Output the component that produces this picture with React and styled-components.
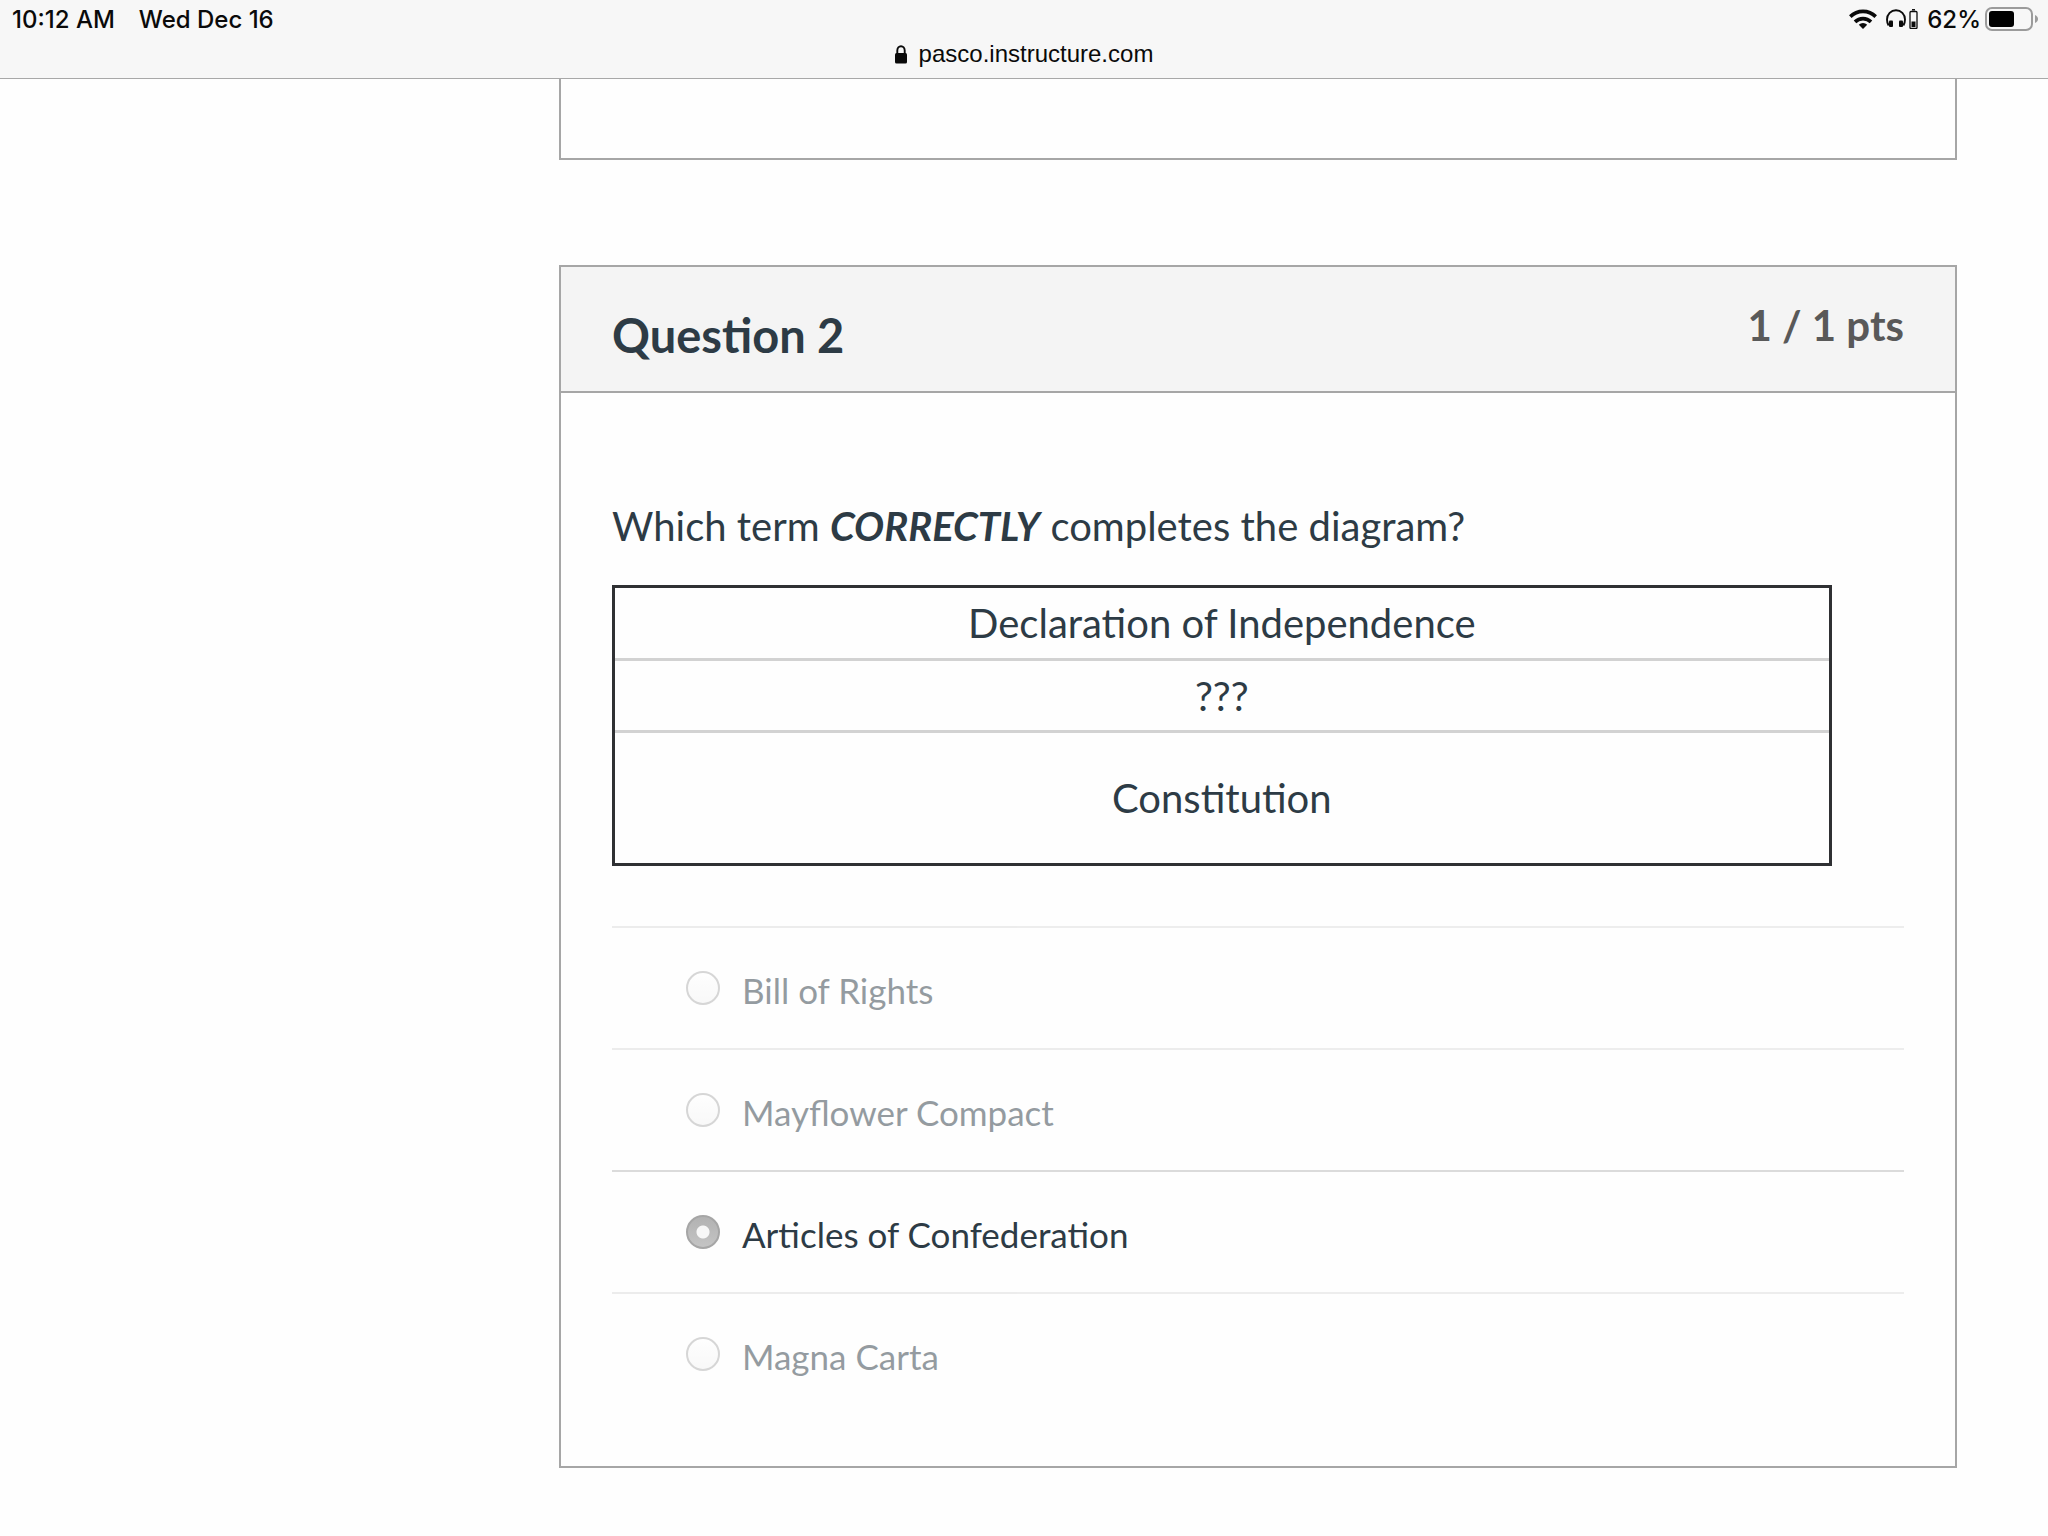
import React, { useState } from 'react';
import styled, { createGlobalStyle } from 'styled-components';

const GlobalStyle = createGlobalStyle`
  * {
    box-sizing: border-box;
  }

  body {
    margin: 0;
    background-color: #fefefe;
    color: #2d3b45;
    font-family: Lato, "Liberation Sans", sans-serif;
  }
`;

const BrowserBar = styled.header`
  background-color: #f7f7f7;
  border-bottom: 1px solid #a8a8a8;
  padding-bottom: 8px;
  color: #0a0a0a;
  font-size: 24px;
`;

const StatusRow = styled.div`
  display: flex;
  align-items: center;
  justify-content: space-between;
  height: 38px;
  padding: 0 10px 0 12px;
  font-family: Inter, "Liberation Sans", sans-serif;
  font-weight: 500;
`;

const StatusTime = styled.div`
  display: flex;
  gap: 24px;
`;

const StatusIcons = styled.div`
  display: flex;
  align-items: center;
  gap: 9px;
`;

const BatteryLevel = styled.div`
  display: flex;
  align-items: center;
  gap: 4px;
`;

const Icon = styled.svg`
  display: block;
  flex: none;
`;

const AddressRow = styled.div`
  display: flex;
  align-items: center;
  justify-content: center;
  gap: 12px;
  font-family: "Liberation Sans", sans-serif;
  line-height: 32px;
`;

const Page = styled.main`
  display: flex;
  flex-direction: column;
  gap: 105px;
  padding: 0 91px 68px 559px;
`;

const PreviousCard = styled.section`
  height: 81px;
  border: 2px solid #a6a6a6;
  border-top: none;
`;

const Card = styled.section`
  border: 2px solid #a6a6a6;
`;

const CardHeader = styled.div`
  display: flex;
  align-items: flex-start;
  justify-content: space-between;
  padding: 33px 51px 31px;
  background-color: #f4f4f4;
  border-bottom: 2px solid #a6a6a6;
`;

const Title = styled.h2`
  margin: 0;
  padding-top: 10px;
  font-size: 47px;
  line-height: 50px;
  font-weight: 700;
`;

const Points = styled.span`
  color: #595959;
  font-size: 42px;
  line-height: 50px;
  font-weight: 700;
`;

const CardBody = styled.div`
  padding: 108px 51px 52px;
`;

const Prompt = styled.p`
  margin: 0 0 34px;
  font-size: 40px;
  line-height: 50px;
`;

const Diagram = styled.table`
  width: 94.4%;
  border-collapse: separate;
  border-spacing: 0;
  border: 3px solid #2f3033;
  font-size: 40px;
  line-height: 48px;
  text-align: center;
`;

const DiagramCell = styled.td`
  height: ${({ $tall }) => ($tall ? '133px' : '72px')};
  padding: 0;
  border-top: 3px solid #d2d2d2;
  vertical-align: middle;

  tr:first-child > & {
    height: 70px;
    border-top: none;
  }
`;

const Answers = styled.fieldset`
  margin: 60px 0 0;
  padding: 0;
  border: none;
`;

const Answer = styled.div`
  display: flex;
  align-items: center;
  gap: 22px;
  height: 122px;
  padding-left: 74px;
  border-top: 2px solid #dbdbdb;
  opacity: ${({ $selected }) => ($selected ? 1 : 0.5)};
`;

const Radio = styled.input`
  appearance: none;
  flex: none;
  width: 34px;
  height: 34px;
  margin: 0;
  border: 2px solid #b0b0b0;
  border-radius: 50%;
  background: linear-gradient(#ffffff, #f4f4f4);

  &:checked {
    border-color: #a6a6a6;
    background: radial-gradient(circle, #f7f7f7 6px, transparent 7px), linear-gradient(#b2b2b2, #c4c4c4);
  }
`;

const AnswerLabel = styled.label`
  padding-top: 4px;
  font-size: 35px;
  line-height: 42px;
`;

const diagramRows = [
  { text: 'Declaration of Independence' },
  { text: '???' },
  { text: 'Constitution', tall: true },
];

const answers = ['Bill of Rights', 'Mayflower Compact', 'Articles of Confederation', 'Magna Carta'];

const WifiIcon = () => (
  <Icon width="28" height="20" viewBox="0 0 28 20" fill="none" stroke="#0a0a0a" strokeWidth="3.6">
    <path d="M1.3 7.6a18 18 0 0 1 25.4 0" />
    <path d="M6 12.9a11.4 11.4 0 0 1 16 0" />
    <path d="M14 20l-4.2-4.2a6 6 0 0 1 8.4 0z" fill="#0a0a0a" stroke="none" />
  </Icon>
);

const HeadphonesIcon = () => (
  <Icon width="32" height="20" viewBox="0 0 32 20" fill="none" stroke="#0a0a0a">
    <path d="M2.6 16.5C1.5 14.6 1 12.6 1 10.5a9 9.3 0 0 1 18 0c0 2.1-.5 4.1-1.6 6" strokeWidth="1.9" />
    <rect x="3" y="11.5" width="4" height="6.5" rx="1" fill="#0a0a0a" stroke="none" />
    <rect x="13" y="11.5" width="4" height="6.5" rx="1" fill="#0a0a0a" stroke="none" />
    <rect x="24" y="2.5" width="7" height="17" rx="1" strokeWidth="1.3" />
    <path d="M26 .8h3" strokeWidth="1.5" />
    <rect x="25.5" y="12.5" width="4" height="5.5" fill="#0a0a0a" stroke="none" />
  </Icon>
);

const BatteryIcon = () => (
  <Icon width="53" height="24" viewBox="0 0 53 24">
    <rect x="1" y="1" width="46" height="22" rx="6" fill="none" stroke="#9b9b9b" strokeWidth="2" />
    <rect x="4" y="4" width="25" height="16" rx="3" fill="#000000" />
    <path d="M50 8c4 1.5 4 6.5 0 8z" fill="#9b9b9b" />
  </Icon>
);

const LockIcon = () => (
  <Icon width="12" height="19" viewBox="0 0 12 19">
    <path d="M2.3 9V5.5a3.7 4.3 0 0 1 7.4 0V9" fill="none" stroke="#0a0a0a" strokeWidth="1.9" />
    <rect x="0" y="8" width="12" height="10.5" rx="1.5" fill="#0a0a0a" />
  </Icon>
);

const App = () => {
  const [selected, setSelected] = useState('Articles of Confederation');

  return (
    <>
      <GlobalStyle />
      <BrowserBar>
        <StatusRow>
          <StatusTime>
            <span>10:12 AM</span>
            <span>Wed Dec 16</span>
          </StatusTime>
          <StatusIcons>
            <WifiIcon />
            <HeadphonesIcon />
            <BatteryLevel>
              <span>62%</span>
              <BatteryIcon />
            </BatteryLevel>
          </StatusIcons>
        </StatusRow>
        <AddressRow>
          <LockIcon />
          <span>pasco.instructure.com</span>
        </AddressRow>
      </BrowserBar>
      <Page>
        <PreviousCard />
        <Card>
          <CardHeader>
            <Title>Question 2</Title>
            <Points>1 / 1 pts</Points>
          </CardHeader>
          <CardBody>
            <Prompt>
              Which term <strong><em>CORRECTLY</em></strong> completes the diagram?
            </Prompt>
            <Diagram>
              <tbody>
                {diagramRows.map(({ text, tall }) => (
                  <tr key={text}>
                    <DiagramCell $tall={tall}>{text}</DiagramCell>
                  </tr>
                ))}
              </tbody>
            </Diagram>
            <Answers>
              {answers.map((answer, index) => (
                <Answer key={answer} $selected={answer === selected}>
                  <Radio
                    type="radio"
                    name="question-2"
                    id={`answer-${index}`}
                    checked={answer === selected}
                    onChange={() => setSelected(answer)}
                  />
                  <AnswerLabel htmlFor={`answer-${index}`}>{answer}</AnswerLabel>
                </Answer>
              ))}
            </Answers>
          </CardBody>
        </Card>
      </Page>
    </>
  );
};

export default App;
